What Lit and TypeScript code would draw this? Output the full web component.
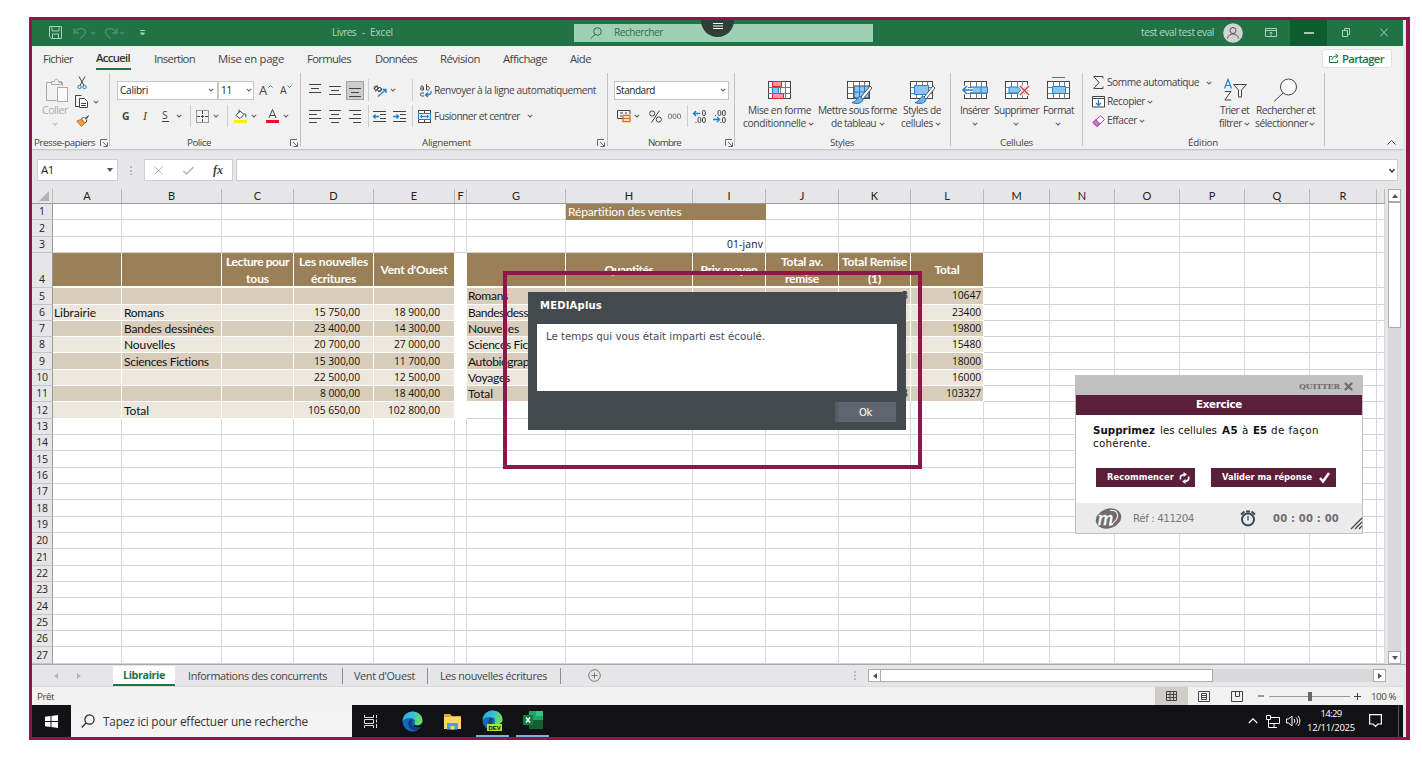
import { LitElement, html, svg, css, nothing } from "lit";
import { customElement } from "lit/decorators.js";

type Item = [number, number, unknown];

/* Lays items out in a flex row; x values are page columns, turned into margins. */
const row = (start: number, items: Item[], cls = "") => {
  let end = start;
  return html`<div class="row ${cls}">${items.map(([x, w, c]) => {
    const m = x - end;
    end = x + w;
    return html`<div class="item" style="margin-left:${m}px;width:${w}px">${c}</div>`;
  })}</div>`;
};

/* Single line of text with a target measure in pixels. */
const t = (text: string, w: number, cls = "") => html`<span class="t ${cls}" data-w=${w}>${text}</span>`;
const T = (x: number, x2: number, text: string, cls = ""): Item => [x, x2 - x, t(text, x2 - x, cls)];

const ic = (w: number, h: number, body: unknown) =>
  html`<svg class="ic" width=${w} height=${h} viewBox="0 0 ${w} ${h}" fill="none" stroke="#444" stroke-width="1">${body}</svg>`;
const I = (x: number, w: number, h: number, body: unknown): Item => [x, w, ic(w, h, body)];

const chev = (color = "#666") => ic(6, 4, svg`<path stroke=${color} stroke-width="1.1" d="M.8.9 3 3 5.2.9"/>`);
const C = (cx: number, color?: string): Item => [cx - 3, 6, chev(color)];
const sep = (x: number): Item => [x, 1, html`<div class="sep"></div>`];
const launcher = (x: number): Item => I(x, 8, 8, svg`<path stroke="#666" d="M.5 7V.5H7M3 3l4 4M7.500 3.500v4h-4"/>`);

const lines = (xs: [number, number][], y0 = 1.5, st = 4) =>
  svg`${xs.map(([a, b], i) => svg`<path d="M${a} ${y0 + i * st}H${b}"/>`)}`;

const gridIcon = svg`<rect x=".5" y=".5" width="22" height="17" fill="#fff"/><path d="M.5 6.500h22M.5 12.500h22M6.500.500v17M12.500.500v17M17.500.500v17" stroke="#777"/>`;
const brush = svg`<path d="M25 5 16 16l2 2L27 7z" fill="#fff" stroke="#555"/><path d="M15.500 15.500c-4 0-3 5-8.500 6 4 2 11 1 11-3.500z" fill="#6cb2e6" stroke="#1b6fb5"/>`;

const COLS: [string, number][] = [
  ["A", 69], ["B", 100], ["C", 72], ["D", 80], ["E", 81], ["F", 12], ["G", 99], ["H", 127], ["I", 73],
  ["J", 73], ["K", 72], ["L", 73], ["M", 66], ["N", 65], ["O", 65], ["P", 65], ["Q", 65], ["R", 67], ["", 8],
];

type Cell = [string, number];
const CELLS: Record<string, Cell> = {
  H1: ["Répartition des ventes", 114], I3: ["01-janv", 36],
  A6: ["Librairie", 42], B6: ["Romans", 40], B7: ["Bandes dessinées", 90], B8: ["Nouvelles", 51],
  B9: ["Sciences Fictions", 85], B12: ["Total", 25],
  D6: ["15 750,00", 46], D7: ["23 400,00", 46], D8: ["20 700,00", 46], D9: ["15 300,00", 46],
  D10: ["22 500,00", 46], D11: ["8 000,00", 40], D12: ["105 650,00", 52],
  E6: ["18 900,00", 46], E7: ["14 300,00", 46], E8: ["27 000,00", 46], E9: ["11 700,00", 46],
  E10: ["12 500,00", 46], E11: ["18 400,00", 46], E12: ["102 800,00", 52],
  G5: ["Romans", 40], G6: ["Bandes dess", 60], G7: ["Nouvelles", 51], G8: ["Sciences Fic", 60],
  G9: ["Autobiograp", 61], G10: ["Voyages", 42], G11: ["Total", 25],
  K5: ["3", 6], K11: ["3", 6],
  L5: ["10647", 29], L6: ["23400", 29], L7: ["19800", 29], L8: ["15480", 29], L9: ["18000", 29],
  L10: ["16000", 29], L11: ["103327", 35],
};
const HEADS: Record<string, [string, number][]> = {
  C: [["Lecture pour", 63], ["tous", 23]], D: [["Les nouvelles", 69], ["écritures", 45]], E: [["Vent d'Ouest", 67]],
  H: [["Quantités", 49]], I: [["Prix moyen", 57]], J: [["Total av.", 42], ["remise", 34]],
  K: [["Total Remise", 65], ["(1)", 13]], L: [["Total", 25]],
};

const edge = (id: string) => svg`
  <defs><linearGradient id=${id} x1="0" y1="0" x2="1" y2=".3"><stop offset="0" stop-color="#2aa8e0"/><stop offset=".6" stop-color="#37c6d0"/><stop offset="1" stop-color="#6fdc5a"/></linearGradient></defs>
  <g stroke="none"><circle cx="10.500" cy="10.500" r="10" fill="#1668b8"/>
  <path d="M.6 10C1 4 5.500.5 10.500.5c6 0 10 4.200 10 9 0 3.500-3 5-5.500 5-2 0-3-.8-2.500-1.700C14 10 12.500 7 8.500 7 4.500 7 1.500 8 .6 10z" fill=${"url(#" + id + ")"}/>
  <path d="M8 8.500c-3 3-2 9 3.500 10.500 3 .8 6-.8 7.500-3-3 1.500-7 1-8.500-1.500C9.300 12.500 10 10 11 9c-.8-.6-2-.9-3-.5z" fill="#0d3f86"/>
  <path d="M12.500 12.800c-.5.900.5 1.700 2.500 1.700 2 0 4-.8 5-2.500l-1 4c-2 1-6 .6-7.500-1z" fill="#101014"/></g>`;

@customElement("app-root")
export class AppRoot extends LitElement {
  static styles = css`
    :host { display: block; width: 1422px; height: 757px; background: #fff; position: relative; overflow: hidden;
      font: 10.5px/13px "Open Sans", "Noto Sans", sans-serif; color: #444; }
    * { box-sizing: border-box; }
    .frame { margin-left: 29px; width: 1381px; height: 723px; border: 3px solid #911549; border-right-width: 4px;
      background: #e6e6e8; display: flex; flex-direction: column; overflow: hidden; }
    .top { height: 17px; }
    .row { display: flex; align-items: center; flex: none; }
    .item { flex: none; display: flex; align-items: center; justify-content: flex-start; }
    .ic { display: block; flex: none; overflow: visible; }
    .t { display: inline-block; white-space: nowrap; flex: none; }
    .sep { width: 1px; height: 22px; background: #cfcdcb; }
    .sep.tall { height: 16px; background: #8c8c8c; }

    .title { height: 26px; width: 1371px; background: #217346; color: #b5d6c3; font-size: 10px; padding-bottom: 1px; }
    .find { width: 299px; height: 18px; background: #a0cfb4; color: #217346; display: flex; align-items: center; }
    .min { width: 37px; height: 26px; background: #0f5c30; display: grid; place-items: center; }
    .tabs { height: 27px; width: 1371px; background: #f2f1f1; font-size: 11.3px; padding-bottom: 3px; }
    .on { font-weight: 600; color: #333; }
    .under { height: 23px; display: flex; flex-direction: column; justify-content: space-between; padding-top: 4px; }
    .bar { width: 35px; height: 2px; background: #217346; }
    .share { width: 70px; height: 19px; background: #fff; border: 1px solid #e4e2e0; border-radius: 2px; color: #217346; font-weight: 600; }
    .share .row { height: 17px; }

    .ribbon { height: 77px; width: 1371px; background: #f2f1f1; border-bottom: 1px solid #c9c7c5; display: flex; }
    .group { flex: none; height: 73px; border-right: 1px solid #c4c2c0; padding-top: 4px; }
    .group .row { height: 26px; }
    .group .body { height: 52px; align-items: flex-start; }
    .group .label { height: 13px; margin-top: 7px; font-size: 9.8px; }
    .fold { align-self: flex-end; height: 13px; }
    .tri { margin-top: -4px; }
    .tri .row { height: 19px; }
    .dim { color: #aaa; }
    .combo { height: 19px; background: #fff; border: 1px solid #c8c6c4; color: #222; font-size: 10px; width: 100%; display: flex; align-items: center; }
    .combo .row { height: 17px; }
    .sel { width: 18px; height: 19px; background: #cfcdcb; border: 1px solid #a3a3a3; display: grid; place-items: center; }
    .big .row { height: 13px; }
    .pict { height: 27px; display: flex; align-items: center; }
    .sm { font-size: 10.2px; }
    .b { font-weight: 700; }
    .i { font-style: italic; font-family: "Liberation Serif", serif; font-size: 12px; }
    .u { border-bottom: 1px solid #444; line-height: 11px; }
    .xl { font-size: 13px; }

    .fbar { height: 39px; align-items: flex-start; padding-top: 8px; width: 1374px; border-top: 1px solid #dcdcde; }
    .fbar .item { height: 22px; }
    .box { height: 22px; width: 100%; background: #fff; border: 1px solid #cfcfd1; display: flex; align-items: center; }
    .cellname { font: 11.5px/14px "Open Sans", sans-serif; color: #222; }
    .fx { font: italic 700 12px/13px "Liberation Serif", serif; }

    .sheet { height: 475px; width: 1374px; display: flex; font: 12px/15px Lato, "Open Sans", sans-serif; }
    .grid { width: 1353px; flex: none; background: #fff; overflow: hidden; }
    .hrow { display: flex; height: 15px; background: #e6e6e8; border-bottom: 1px solid #9b9b9b; color: #222; font-size: 11px; }
    .hcell { flex: none; border-right: 1px solid #b9b9b9; text-align: center; line-height: 13px; }
    .corner { width: 21px; flex: none; border-right: 1px solid #b9b9b9; display: flex; justify-content: flex-end; align-items: flex-end; padding: 0 3px 2px 0; }
    .line { display: flex; height: 16.33px; color: #111; }
    .line.tall { height: 35.2px; }
    .num { width: 21px; flex: none; background: #e6e6e8; border-right: 1px solid #9b9b9b; border-bottom: 1px solid #c4c4c4; text-align: center;
      color: #222; display: flex; align-items: flex-end; justify-content: center; font: 10.5px/16px "Open Sans", sans-serif; letter-spacing: -.2px; }
    .cell { flex: none; border-right: 1px solid #dadada; border-bottom: 1px solid #d4d4d4; display: flex; align-items: center; padding: 0 2px 0 1px; line-height: 15px; overflow: hidden; white-space: nowrap; }
    .cell.in { padding-left: 2px; }
    .cell.r { justify-content: flex-end; font: 10.3px/15px "Open Sans", sans-serif; }
    .cell.acc { padding-right: 13px; }
    .cell.e { padding-right: 14px; }
    .cell.d { background: #d8cdbb; border-color: #fff; }
    .cell.l { background: #ece6dc; border-color: #fff; }
    .cell.w { border-color: #fff; }
    .cell.h { background: #9b8057; color: #fff; border-color: #fff; border-bottom-width: 2px; flex-direction: column; justify-content: center; font-weight: 700; line-height: 17px; padding: 0; }
    .cell.h1 { background: #9b8057; color: #fff; border-color: #9b8057; overflow: visible; padding-left: 2px; }
    .vs { margin-left: 3px; width: 13px; height: 475px; display: flex; flex-direction: column; background: #d9d9db; }
    .btn { width: 13px; height: 13px; background: #fff; border: 1px solid #ababab; display: grid; place-items: center; flex: none; }
    .vthumb { height: 126px; background: #fff; border: 1px solid #ababab; }
    .fill { flex: 1; }

    .sheets { height: 22px; width: 1374px; border-top: 1px solid #aaa; font-size: 10.8px; }
    .sheets .t { margin-top: -1px; }
    .tab { width: 62px; height: 20px; background: #fff; border-bottom: 2px solid #217346; color: #217346; font-weight: 700; display: flex; align-items: center; justify-content: center; }
    .hthumb { width: 333px; height: 13px; background: #fff; border: 1px solid #ababab; }
    .htrack { width: 160px; height: 13px; background: #d9d9db; }
    .status { height: 19px; width: 1371px; background: #f2f1f1; font-size: 9.8px; border-top: 1px solid #dcdcdc; }
    .view { width: 33px; height: 18px; background: #cfcdc9; display: grid; place-items: center; }
    .zoom { width: 81px; height: 10px; display: flex; align-items: center; background: linear-gradient(#9a9a9a, #9a9a9a) center / 100% 1px no-repeat; }
    .knob { width: 4px; height: 9px; background: #666; margin-left: 39px; }
    .task { height: 32px; width: 1371px; background: #121214; color: #fff; }
    .ask { width: 281px; height: 32px; background: #f3f3f3; color: #333; font-size: 11.8px; display: flex; align-items: center; }
    .app { height: 32px; width: 33px; display: flex; align-items: center; justify-content: center; border-bottom: 2px solid #6cb7ee; }
    .clock { font: 9.5px/14px "Open Sans", sans-serif; width: 48px; display: flex; flex-direction: column; align-items: center; }
    .badge { font: 700 6px/6px "Liberation Sans", sans-serif; }

    .puck { position: absolute; left: 701px; top: 20px; width: 33px; height: 17px; border-radius: 0 0 17px 17px; background: #2d3f37; display: flex; justify-content: center; padding-top: 3px; }
    .mark { position: absolute; left: 503px; top: 271px; width: 419px; height: 198px; border: 4px solid #911549; }
    .dialog { position: absolute; left: 528px; top: 292px; width: 378px; height: 138px; background: #434a4e; padding: 7px 9px; color: #fff; font-family: "DejaVu Sans", sans-serif; display: flex; flex-direction: column; }
    .dhead { height: 25px; padding: 0 3px; font-weight: 700; display: flex; align-items: flex-start; font-size: 10px; }
    .dbody { height: 67px; background: #fff; color: #444b57; padding: 6px 9px; font-size: 10.3px; }
    .ok { align-self: flex-end; margin: 11px 1px 0 0; width: 61px; height: 20px; background: #5f6671; display: grid; place-items: center; font-size: 10px; border-left: 3px solid #555c65; padding-right: 3px; }
    .panel { position: absolute; left: 1075px; top: 375px; width: 288px; height: 159px; border: 1px solid #c1c1c1; background: #fff; color: #222; font-family: "DejaVu Sans", sans-serif; font-size: 10.3px; display: flex; flex-direction: column; }
    .quit { height: 19px; background: #c1c1c1; font-family: "DejaVu Serif", serif; font-weight: 700; font-size: 8px; color: #716b70; padding-top: 2px; }
    .ex { height: 20px; background: #591f3b; color: #fff; font-weight: 700; padding-bottom: 2px; }
    .msg { height: 88px; padding-top: 9px; color: #111; }
    .msg .row { height: 13px; }
    .msg .acts { height: 19px; margin-top: 18px; }
    .act { height: 19px; width: 100%; background: #591f3b; color: #fff; font-weight: 700; font-size: 8.3px; }
    .act .row { height: 19px; }
    .foot { height: 30px; background: #ebebeb; color: #777; }
    .count { font-weight: 700; color: #716b70; font-size: 10px; }
    .m { font: italic 22px/20px "Liberation Serif", serif; }
  `;

  firstUpdated() {
    this.renderRoot.querySelectorAll<HTMLElement>("[data-w]").forEach((el) => {
      const n = (el.textContent ?? "").length;
      const w = Number(el.dataset.w);
      el.style.letterSpacing = `${(w - el.getBoundingClientRect().width) / n}px`;
    });
  }

  titleBar() {
    const g = "#a9d2ba";
    const d = "#4c9169";
    return row(32, [
      I(49, 13, 13, svg`<path stroke=${g} d="M.5.500h12v12h-10l-2-2zM3 .5v4.500h7V.5M3.500 12.500V8h6v4.500"/>`),
      I(73, 14, 12, svg`<path stroke=${d} stroke-width="1.300" d="M1 1v5h5M1.500 5.500C4 1 11 0 12.500 4.500 13.500 8 9 9 7 12"/>`), C(93, d),
      I(104, 14, 12, svg`<path stroke=${d} stroke-width="1.300" d="M13 1v5H8M12.500 5.500C10 1 3 0 1.500 4.500.5 8 5 9 7 12"/>`), C(122, d),
      I(139, 7, 6, svg`<path stroke=${g} d="M1 .5h5M1.500 3 3.500 5l2-2z" fill=${g}/>`),
      T(332, 356, "Livres"), T(362, 365, "-"), T(370, 393, "Excel"),
      [574, 299, html`<div class="find">${row(574, [
        I(590, 12, 12, svg`<circle cx="7.500" cy="4.500" r="3.800" stroke="#217346"/><path stroke="#217346" d="M5 7.500.8 11.500"/>`),
        T(614, 663, "Rechercher"),
      ])}</div>`],
      T(1141, 1214, "test eval test eval"),
      I(1223, 20, 20, svg`<circle cx="10" cy="10" r="9.800" fill="#d3d3d3" stroke="none"/><circle cx="10" cy="7.500" r="3" stroke="#555"/><path stroke="#555" d="M4.500 15.500c.8-6 10.200-6 11 0"/>`),
      I(1265, 12, 9, svg`<path stroke=${g} d="M.5.500h11v8H.5zM.5 2.500h11M6 8V4.500M4.500 5.500 6 4l1.500 1.500"/>`),
      [1290, 37, html`<div class="min">${ic(10, 2, svg`<path d="M0 1h10" stroke="#fff" stroke-width="1.300"/>`)}</div>`],
      I(1342, 8, 9, svg`<path stroke=${g} d="M.5 2.500h5v6h-5zM2.500 2V.5h5v6H6"/>`),
      I(1380, 8, 9, svg`<path stroke=${g} d="M.3.500l7.500 8M7.700.500l-7.500 8"/>`),
    ], "title");
  }

  tabs() {
    return row(32, [
      T(43, 73, "Fichier"),
      [96, 35, html`<div class="under">${t("Accueil", 34, "on")}<div class="bar"></div></div>`],
      T(154, 195, "Insertion"), T(218, 284, "Mise en page"), T(307, 351, "Formules"), T(375, 417, "Données"),
      T(440, 480, "Révision"), T(503, 547, "Affichage"), T(570, 591, "Aide"),
      [1322, 70, html`<div class="share">${row(1323, [
        I(1329, 10, 10, svg`<path stroke="#217346" d="M3 3.500H.5v6h8V7M3 7c0-3 2-4 5-4M6.500.800 9 3 6.500 5.200"/>`),
        T(1342, 1384, "Partager"),
      ])}</div>`],
    ], "tabs");
  }

  big(x: number, w: number, icon: Item, l1: Item, l2: Item[]): Item {
    const m = icon[0] - x;
    return [x, w, html`<div class="big"><div class="pict" style="padding-left:${m}px">${icon[2]}</div>${row(x, [l1])}${row(x, l2)}</div>`];
  }

  group(x: number, x2: number, body: unknown, label: Item[]) {
    return html`<div class="group" style="width:${x2 - x}px">${body}${row(x, label, "label")}</div>`;
  }

  ribbon() {
    const k = "#444";
    const blue = "#1f7fd0";
    return html`<div class="ribbon">
      ${this.group(32, 110, row(32, [
        this.big(41, 28, I(46, 24, 25, svg`<path stroke="#aaa" d="M5.500 4.500h-5v18h10M16.500 8V4.500h-4"/><path stroke="#aaa" d="M5.500 6.500v-3h3c0-3 4-3 4 0h3v3z"/><rect x="11.500" y="9.500" width="10" height="14" stroke="#aaa" fill="#fafafa"/>`),
          T(42, 68, "Coller", "dim"), [C(55, "#bbb")]),
        [74, 26, html`<div class="tri">
          ${row(74, [I(77, 10, 14, svg`<path d="M2 .5l5 9M8 .5l-5 9" stroke=${k}/><circle cx="2.500" cy="11" r="1.700" stroke=${blue}/><circle cx="7.500" cy="11" r="1.700" stroke=${blue}/>`)])}
          ${row(74, [I(75, 13, 13, svg`<path stroke=${k} d="M4 11.500H.5V.5h6"/><path stroke=${k} fill="#fff" d="M4.500 3.500h5l3 3v6h-8zM6 8.500h5M6 10.500h5"/>`), C(96)])}
          ${row(74, [I(76, 13, 12, svg`<path fill="#fff" stroke=${k} d="M12.500.8 9 3.500 7.500 2 5.500 4l3.500 4 2-2-1-1.500z"/><path d="M5 4.500.8 6l4.700 5.500L9 8z" fill="#f0a048" stroke="#d9731a"/>`)])}
        </div>`],
      ], "body"), [T(34, 95, "Presse-papiers"), launcher(100)])}

      ${this.group(110, 301, html`${row(110, [
        [117, 101, html`<div class="combo">${row(118, [T(120, 148, "Calibri"), C(211)])}</div>`],
        [218, 36, html`<div class="combo">${row(219, [T(221, 232, "11"), C(249)])}</div>`],
        T(259, 268, "A", "xl"), I(268, 5, 12, svg`<path stroke=${blue} d="M.5 3.500 2.500 1.500l2 2"/>`),
        T(280, 287, "A"), I(287, 5, 12, svg`<path stroke=${blue} d="M.5 1.500 2.500 3.500l2-2"/>`),
      ])}${row(110, [
        T(122, 130, "G", "b"), T(143, 149, "I", "i"), T(162, 169, "S", "u"), C(179), sep(190),
        I(196, 13, 13, svg`<path stroke=${k} stroke-dasharray="1 1" d="M.5.500h12v12H.5z"/><path stroke=${k} d="M6.500 1v11M1 6.500h11" stroke-dasharray="3 1"/>`), C(216), sep(227),
        I(234, 13, 14, svg`<path stroke=${k} fill="#fff" d="M6 2 2 6.500 6 9.500l4-4zM5 4V.5"/><path stroke=${blue} stroke-width="1.300" d="M10.500 4.500c2 1 1.500 3 1 3.500"/><path stroke="#ffee00" stroke-width="3" d="M0 12.500h13"/>`), C(254),
        I(266, 13, 14, svg`<path stroke=${k} d="M3 9 6.500.500 10 9M4 6.500h5"/><path stroke="#e81123" stroke-width="3" d="M0 12.500h13"/>`), C(286),
      ])}`, [T(187, 211, "Police"), launcher(290)])}

      ${this.group(301, 608, html`${row(301, [
        I(309, 13, 13, svg`<g stroke=${k}>${lines([[0, 12], [2, 10], [0, 12]], 0.5, 4)}</g>`),
        I(329, 13, 13, svg`<g stroke=${k}>${lines([[0, 12], [2, 10], [0, 12]], 2.5, 4)}</g>`),
        [346, 18, html`<div class="sel">${ic(13, 13, svg`<g stroke=${k}>${lines([[0, 12], [2, 10], [0, 12]], 4.5, 4)}</g>`)}</div>`],
        sep(368),
        I(373, 14, 13, svg`<path stroke=${k} d="M1 5 5 1.500M2 7.500 7 3M5 8l4-3.500"/><circle cx="3" cy="4" r="2" stroke=${k}/><circle cx="6.500" cy="5.500" r="2" stroke=${k}/><path stroke=${blue} stroke-width="1.300" d="M5 12.500 12.500 6M9.500 5.500h3.500V9"/>`), C(393),
        sep(412),
        [420, 12, ic(12, 13, svg`<path stroke=${k} d="M.5 3.500c0-2 3-2 3 0V6H1.500C0 6 0 4 1.500 4h2M6.500 0v6c4 .8 4-4 0-3.500M4 9H1.500C0 9 0 12 1.500 12H4"/><path stroke=${blue} stroke-width="1.300" d="M11 7c1 3-2 4-5 4M8 8.500 5.500 11 8 13"/>`)],
        T(434, 596, "Renvoyer à la ligne automatiquement", "sm"),
      ])}${row(301, [
        I(309, 13, 13, svg`<g stroke=${k}>${lines([[0, 12], [0, 8], [0, 12], [0, 8]], 0.5, 4)}</g>`),
        I(329, 13, 13, svg`<g stroke=${k}>${lines([[0, 12], [2, 10], [0, 12], [2, 10]], 0.5, 4)}</g>`),
        I(349, 13, 13, svg`<g stroke=${k}>${lines([[0, 12], [4, 12], [0, 12], [4, 12]], 0.5, 4)}</g>`),
        sep(368),
        I(373, 13, 13, svg`<path stroke=${k} d="M0 1.500h13M7 4.500h6M7 8.500h6M0 11.500h13"/><path stroke=${blue} stroke-width="1.400" d="M0 6.500h6M2.500 4.500l-2 2 2 2"/>`),
        I(393, 13, 13, svg`<path stroke=${k} d="M0 1.500h13M7 4.500h6M7 8.500h6M0 11.500h13"/><path stroke=${blue} stroke-width="1.400" d="M0 6.500h6M3.500 4.500l2 2-2 2"/>`),
        sep(412),
        I(418, 13, 13, svg`<rect x=".5" y=".5" width="12" height="12" fill="#fff" stroke=${k}/><path stroke=${k} d="M6.500 1v11"/><rect x=".5" y="3.500" width="12" height="6" fill="#d9ecfb" stroke=${blue}/><path stroke=${blue} d="M2.500 6.500h8M4 5 2.500 6.500 4 8M9 5l1.500 1.500L9 8"/>`),
        T(434, 520, "Fusionner et centrer", "sm"), C(530),
      ])}`, [T(422, 471, "Alignement"), launcher(597)])}

      ${this.group(608, 735, html`${row(608, [
        [614, 115, html`<div class="combo">${row(615, [T(616, 655, "Standard"), C(723)])}</div>`],
      ])}${row(608, [
        I(617, 14, 12, svg`<path stroke=${k} d="M13 4V.500H.5v8H6M3 3h3M3 6h2M8 3h2"/><path stroke="#d9731a" stroke-width="1.300" fill="#fff" d="M6 5.500h7v6H6zM6 8.500h7"/>`), C(637),
        [649, 13, ic(13, 13, svg`<circle cx="3.200" cy="3.500" r="2.600"/><circle cx="9.800" cy="9.500" r="2.600"/><path d="M10.500.500 2.500 12.500"/>`)],
        I(668, 13, 7, svg`<g stroke="#777"><rect x=".5" y="1" width="3" height="4.500" rx="1.200"/><rect x="5" y="1" width="3" height="4.500" rx="1.200"/><rect x="9.500" y="1" width="3" height="4.500" rx="1.200"/></g>`),
        sep(687),
        I(693, 13, 13, svg`<path stroke=${blue} stroke-width="1.400" d="M.5 3.500H7M3 1 .5 3.500 3 6"/><rect x="9.500" y=".5" width="2.800" height="5" rx="1.300"/><rect x="5" y="7.500" width="2.800" height="5" rx="1.300"/><rect x="9.500" y="7.500" width="2.800" height="5" rx="1.300"/><path d="M3 12v1"/>`),
        I(713, 13, 13, svg`<path stroke=${blue} stroke-width="1.400" d="M0 9.500h6.500M4 7l2.500 2.500L4 12"/><rect x="5" y=".5" width="2.800" height="5" rx="1.300"/><rect x="9.500" y=".5" width="2.800" height="5" rx="1.300"/><rect x="9.500" y="7.500" width="2.800" height="5" rx="1.300"/><path d="M2.500 5v1M8 12v1"/>`),
      ])}`, [T(648, 681, "Nombre"), launcher(725)])}

      ${this.group(735, 951, row(735, [
        this.big(742, 74, I(768, 23, 20, svg`${gridIcon}<path d="M4.500.500h9v5h-9zM4.500 12.500h11v5h-11z" fill="#ff9aa0" stroke="#e22"/><path d="M4.500 6.500h6v6h-6z" fill="#8cc4f0" stroke=${blue}/>`),
          T(748, 811, "Mise en forme", "sm"), [T(743, 806, "conditionnelle", "sm"), C(811)]),
        this.big(818, 80, I(847, 26, 24, svg`<g transform="translate(0 2)">${gridIcon}<path d="M7 5h15v12H7z" fill="#8cc4f0"/><path d="M7 11h15M12.500 5v12M17.500 5v12" stroke=${blue}/><g transform="translate(-2)">${brush}</g></g>`),
          T(818, 897, "Mettre sous forme", "sm"), [T(831, 876, "de tableau", "sm"), C(882)]),
        this.big(901, 44, I(910, 26, 24, svg`<g transform="translate(0 2)">${gridIcon}<path d="M4.500 4.500h14v9h-14z" fill="#8cc4f0" stroke=${blue}/><g transform="translate(-2)">${brush}</g></g>`),
          T(903, 941, "Styles de", "sm"), [T(901, 933, "cellules", "sm"), C(938)]),
      ], "body"), [T(830, 854, "Styles")])}

      ${this.group(951, 1083, row(951, [
        this.big(960, 30, I(962, 26, 20, svg`<g transform="translate(2)">${gridIcon}</g><path d="M9 6h16.500v6H9z" fill="#8cc4f0" stroke=${blue}/><path d="M19 6v6" stroke=${blue}/><path d="M1 9h10M5 5 1 9l4 4" stroke="#fff" stroke-width="4"/><path d="M1 9h10M5 5 1 9l4 4" stroke=${blue} stroke-width="1.500"/>`),
          T(960, 989, "Insérer", "sm"), [C(975)]),
        this.big(994, 46, I(1005, 25, 20, svg`${gridIcon}<path d="M4 6h9l3 3-3 3H4z" fill="#8cc4f0" stroke=${blue}/><path d="M15 5l9 9M24 5l-9 9" stroke="#f2f1f1" stroke-width="4"/><path d="M15 5l9 9M24 5l-9 9" stroke="#e8383d" stroke-width="1.300"/>`),
          T(994, 1039, "Supprimer", "sm"), [C(1016)]),
        this.big(1042, 32, I(1047, 23, 20, svg`${gridIcon}<path d="M5.500 5.500h13v7h-13z" fill="#8cc4f0" stroke=${blue}/><path d="M5-3.500h13" stroke=${blue}/>`),
          T(1043, 1074, "Format", "sm"), [C(1058)]),
      ], "body"), [T(1000, 1033, "Cellules")])}

      ${this.group(1083, 1325, row(1083, [
        [1090, 125, html`<div class="tri">
          ${row(1090, [I(1093, 11, 13, svg`<path d="M10 2.500V.500H.8L6 6.500.8 12.500H10v-2" stroke=${k}/>`), T(1107, 1199, "Somme automatique", "sm"), C(1209)])}
          ${row(1090, [I(1092, 13, 12, svg`<path d="M.5.500h12v10.500H.5zM.5 2.500h12" stroke=${k} fill="#fff"/><path d="M6.500 4v5M4 7l2.500 2.500L9 7" stroke=${blue} stroke-width="1.300"/>`), T(1107, 1145, "Recopier", "sm"), C(1150)])}
          ${row(1090, [I(1092, 13, 12, svg`<path d="M8.500.8 12.500 4.500 5 11.500 1 7.500z" stroke="#a33ba3" fill="#fff"/><path d="M3.800 4.800 8 8.700 5 11.500 1 7.500z" stroke="#a33ba3" fill="#c77dc7"/>`), T(1107, 1137, "Effacer", "sm"), C(1142)])}
        </div>`],
        this.big(1219, 32, I(1224, 24, 24, svg`<path stroke=${blue} stroke-width="1.200" d="M.5 9.500 4 .500 7.500 9.500M1.500 6.500h5"/><path stroke=${k} d="M.8 12.500h6.200L.8 21h6.500M9.500 5.500h13L17.500 11v7h-3v-7z"/>`),
          T(1220, 1249, "Trier et", "sm"), [T(1219, 1242, "filtrer", "sm"), C(1247)]),
        this.big(1255, 62, I(1273, 25, 26, svg`<circle cx="15.500" cy="9" r="8" fill="#fafafa" stroke=${k}/><path d="M10 15 1 23.500" stroke=${k}/>`),
          T(1256, 1315, "Rechercher et", "sm"), [T(1255, 1308, "sélectionner", "sm"), C(1312)]),
      ], "body"), [T(1188, 1218, "Édition")])}
      ${row(1325, [I(1387, 9, 5, svg`<path d="M.5 4.500l4-4 4 4"/>`)], "fold")}
    </div>`;
  }

  formula() {
    return row(32, [
      [37, 81, html`<div class="box">${row(38, [T(41, 54, "A1", "cellname"), I(107, 7, 5, svg`<path d="M0 0h6L3 4z" fill="#555" stroke="none"/>`)])}</div>`],
      I(130, 2, 9, svg`<path d="M1 0v2M1 4v2M1 7.500v1.500" stroke="#aaa" stroke-width="1.500"/>`),
      [144, 89, html`<div class="box">${row(145, [
        I(154, 9, 9, svg`<path d="M.5.500l8 8M8.500.500l-8 8" stroke="#b5b5b5"/>`),
        I(183, 11, 9, svg`<path d="M.5 5 3.500 8l7-7" stroke="#b5b5b5" stroke-width="1.500"/>`),
        T(213, 223, "fx", "fx"),
      ])}</div>`],
      [236, 1162, html`<div class="box">${row(237, [I(1389, 6, 5, svg`<path d="M.5 1 3 4l2.500-3" stroke="#444" stroke-width="1.500"/>`)])}</div>`],
    ], "fbar");
  }

  cell(col: string, w: number, n: number) {
    const left = "ABCDE".includes(col);
    const right = "GHIJKL".includes(col);
    const inTable = col !== "" && n >= 5 && ((left && n <= 12) || (right && n <= 11));
    let cls = "";
    if (n === 4 && col && (left || right)) cls = "h";
    else if (inTable) cls = n % 2 ? "d" : "l";
    else if (n === 1 && (col === "H" || col === "I")) cls = "h1";
    else if (n >= 4 && n <= 12 && col === "F") cls = "w";
    if (col === "B") cls += " in";
    if ("DEIKL".includes(col) && col && n !== 4) cls += " r";
    if (col === "D" && n > 4) cls += " acc";
    if (col === "E" && n > 4) cls += " e";
    const c = CELLS[col + n];
    const body = n === 4 ? (HEADS[col] ?? []).map(([s, m]) => t(s, m)) : c ? t(c[0], c[1]) : nothing;
    return html`<div class="cell ${cls}" style="width:${w}px">${body}</div>`;
  }

  sheet() {
    const rows = Array.from({ length: 27 }, (_, i) => i + 1);
    return html`<div class="sheet">
      <div class="grid">
        <div class="hrow"><div class="corner">${ic(10, 10, svg`<path d="M10 0v10H0z" fill="#b3b3b3" stroke="none"/>`)}</div>
          ${COLS.map(([c, w]) => html`<div class="hcell" style="width:${w}px">${c}</div>`)}</div>
        ${rows.map((n) => html`<div class="line ${n === 4 ? "tall" : ""}"><div class="num">${n}</div>${COLS.map(([c, w]) => this.cell(c, w, n))}</div>`)}
      </div>
      <div class="vs">
        <div class="btn">${ic(6, 4, svg`<path d="M0 4h6L3 0z" fill="#555" stroke="none"/>`)}</div>
        <div class="vthumb"></div><div class="fill"></div>
        <div class="btn">${ic(6, 4, svg`<path d="M0 0h6L3 4z" fill="#555" stroke="none"/>`)}</div>
      </div>
    </div>`;
  }

  sheets() {
    const s = (x: number): Item => [x, 1, html`<div class="sep tall"></div>`];
    return row(32, [
      I(54, 4, 6, svg`<path d="M4 0v6L0 3z" fill="#b5b5b5" stroke="none"/>`),
      I(77, 4, 6, svg`<path d="M0 0v6l4-3z" fill="#b5b5b5" stroke="none"/>`),
      [113, 62, html`<div class="tab">${t("Librairie", 42)}</div>`],
      T(188, 327, "Informations des concurrents"), s(342), T(354, 415, "Vent d'Ouest"), s(427),
      T(440, 547, "Les nouvelles écritures"), s(560),
      I(588, 13, 13, svg`<circle cx="6.500" cy="6.500" r="5.800" stroke="#777"/><path d="M6.500 3.500v6M3.500 6.500h6" stroke="#777"/>`),
      I(854, 2, 9, svg`<path d="M1 0v2M1 3.500v2M1 7v2" stroke="#aaa" stroke-width="1.500"/>`),
      [868, 12, html`<div class="btn">${ic(4, 6, svg`<path d="M4 0v6L0 3z" fill="#555" stroke="none"/>`)}</div>`],
      [880, 333, html`<div class="hthumb"></div>`],
      [1213, 160, html`<div class="htrack"></div>`],
      [1373, 13, html`<div class="btn">${ic(4, 6, svg`<path d="M0 0v6l4-3z" fill="#555" stroke="none"/>`)}</div>`],
    ], "sheets");
  }

  status() {
    return row(32, [
      T(37, 54, "Prêt"),
      [1155, 33, html`<div class="view">${ic(11, 10, svg`<path d="M.5.500h10v9H.5zM.5 3.500h10M.5 6.500h10M4 .5v9M7.500.500v9"/>`)}</div>`],
      I(1198, 12, 11, svg`<path d="M.5.500h11v10H.5zM3.500 2.500h5v6h-5zM4 4.500h4M4 6.500h4"/>`),
      I(1231, 12, 11, svg`<path d="M.5.500h11v10H.5zM4.500.500v5h4v-5"/>`),
      I(1258, 6, 2, svg`<path d="M0 1h6"/>`),
      [1269, 81, html`<div class="zoom"><div class="knob"></div></div>`],
      I(1354, 7, 7, svg`<path d="M0 3.500h7M3.500 0v7"/>`),
      T(1371, 1396, "100 %"),
    ], "status");
  }

  taskbar() {
    return row(32, [
      I(45, 13, 13, svg`<path d="M0 1.800 5.500 1v5H0zM6.500.900 13 0v6H6.500zM0 7h5.500v5L0 11.300zM6.500 7H13v6l-6.500-.9z" fill="#fff" stroke="none"/>`),
      [71, 281, html`<div class="ask">${row(71, [
        I(81, 14, 14, svg`<circle cx="8.500" cy="5.500" r="4.600" stroke="#222" stroke-width="1.200"/><path d="M5 9 .800 13.500" stroke="#222" stroke-width="1.200"/>`),
        T(103, 308, "Tapez ici pour effectuer une recherche"),
      ])}</div>`],
      I(364, 14, 13, svg`<path stroke="#ddd" d="M.5 0v2.500h9V0M.5 4.500h9v4h-9zM.5 13v-2.500h9V13M12.500 0v3M12.500 4.500v3M12.500 9v4"/>`),
      I(402, 21, 21, edge("e1")),
      I(443, 19, 17, svg`<g stroke="none"><path d="M1 1h6l2 2h9v13H1z" fill="#e8a33d"/><path d="M1 4h17v12H1z" fill="#ffd766"/><path d="M4 10h11v6.500H4z" fill="#4b9fe0"/><path d="M7.500 13h4v3.500h-4z" fill="#ffd766"/></g>`),
      [476, 33, html`<div class="app">${ic(21, 21, svg`${edge("e2")}<rect x="5" y="14" width="15" height="7" fill="#a4e838" stroke="none"/><text class="badge" x="6.500" y="19.700" fill="#111" stroke="none">DEV</text>`)}</div>`],
      [516, 33, html`<div class="app">${ic(20, 18, svg`<g stroke="none"><rect x="6" width="14" height="18" fill="#21a366"/><rect x="6" y="9" width="14" height="9" fill="#185c37"/><rect x="13" width="7" height="5" fill="#33c481"/><rect y="4" width="10" height="10" fill="#107c41"/></g><path d="M3 6.500 7 11.500M7 6.500 3 11.500" stroke="#fff" stroke-width="1.400"/>`)}</div>`],
      I(1248, 10, 6, svg`<path d="M.8 5 5 .8 9.200 5" stroke="#fff" stroke-width="1.200"/>`),
      I(1266, 14, 13, svg`<path stroke="#fff" d="M4 2.500h9.500v6H3.500M8 9v3M5 12.500h6M.5.500h4v4h-4zM2.500 5v7.500h3"/>`),
      I(1286, 14, 12, svg`<path stroke="#fff" d="M.5 4v4h2L6 11V1L2.500 4zM8 4c1 1 1 3 0 4M10 2.500c2 2 2 5 0 7M12 1c2.500 3 2.500 7 0 10"/>`),
      [1307, 48, html`<div class="clock">${t("14:29", 21)}${t("12/11/2025", 48)}</div>`],
      I(1369, 13, 14, svg`<path stroke="#fff" stroke-width="1.200" d="M.6.600h11.800v9.400H9l-2.500 2.500L4 10H.6z"/>`),
      I(1398, 1, 32, svg`<path stroke="#555" d="M.5 0v32"/>`),
    ], "task");
  }

  render() {
    return html`
      <div class="top"></div>
      <div class="frame">
        ${this.titleBar()}${this.tabs()}${this.ribbon()}${this.formula()}${this.sheet()}${this.sheets()}${this.status()}${this.taskbar()}
      </div>
      <div class="puck">${ic(10, 6, svg`<path d="M0 .5h10M0 3h10M0 5.500h10" stroke="#fff"/>`)}</div>
      <div class="mark"></div>
      <div class="dialog">
        <div class="dhead">${t("MEDIAplus", 62)}</div>
        <div class="dbody">${t("Le temps qui vous était imparti est écoulé.", 219)}</div>
        <div class="ok">${t("Ok", 13)}</div>
      </div>
      <div class="panel">
        ${row(1076, [T(1299, 1340, "QUITTER"), I(1344, 9, 9, svg`<path d="M1.500 1.500l6 6M7.500 1.500l-6 6" stroke="#716b70" stroke-width="2.300" stroke-linecap="round"/>`)], "quit")}
        ${row(1076, [T(1196, 1242, "Exercice")], "ex")}
        <div class="msg">
          ${row(1076, [T(1093, 1155, "Supprimez", "b"), T(1160, 1217, "les cellules"), T(1222, 1238, "A5", "b"), T(1242, 1248, "à"), T(1253, 1267, "E5", "b"), T(1271, 1319, "de façon")])}
          ${row(1076, [T(1093, 1151, "cohérente.")])}
          ${row(1076, [
            [1096, 99, html`<div class="act">${row(1096, [T(1107, 1174, "Recommencer"), I(1179, 11, 12, svg`<path d="M1.500 7.500c-1-3 1-5 4-5M9.500 4.500c1 3-1 5-4 5" stroke="#fff" stroke-width="1.700"/><path d="M4.500 0l3.500 2.500-3.500 2.500zM6.500 7 3 9.500 6.500 12z" fill="#fff" stroke="none"/>`)])}</div>`],
            [1211, 125, html`<div class="act">${row(1211, [T(1222, 1312, "Valider ma réponse"), I(1319, 11, 11, svg`<path d="M1 6l3 3.500L10 1" stroke="#fff" stroke-width="2.500"/>`)])}</div>`],
          ], "acts")}
        </div>
        ${row(1076, [
          I(1095, 27, 21, svg`<ellipse cx="13.500" cy="10.500" rx="13" ry="9.800" transform="rotate(-18 13.500 10.500)" fill="#716b70" stroke="none"/><path d="M15 2.500c8-1 9 5 6 9.500-2 3-4 4.500-7 5.500" stroke="#ebebeb" stroke-width="1.200"/><text class="m" x="2.500" y="17" fill="#fff" stroke="#fff" stroke-width=".4">m</text>`),
          T(1133, 1194, "Réf : 411204"),
          I(1240, 16, 17, svg`<circle cx="8" cy="9.500" r="6" stroke="#3c4a5c" stroke-width="2"/><path d="M8 6v4.500" stroke="#3c4a5c" stroke-width="1.300"/><path d="M1 4.500l3.500-3M15 4.500l-3.500-3M6 1.500h4" stroke="#3c4a5c" stroke-width="2.200"/>`),
          T(1273, 1339, "00 : 00 : 00", "count"),
          I(1350, 12, 12, svg`<path d="M1 17 12 6M5 17l7-7M9 17l3-3" stroke="#444" stroke-width="1.200"/>`),
        ], "foot")}
      </div>`;
  }
}
